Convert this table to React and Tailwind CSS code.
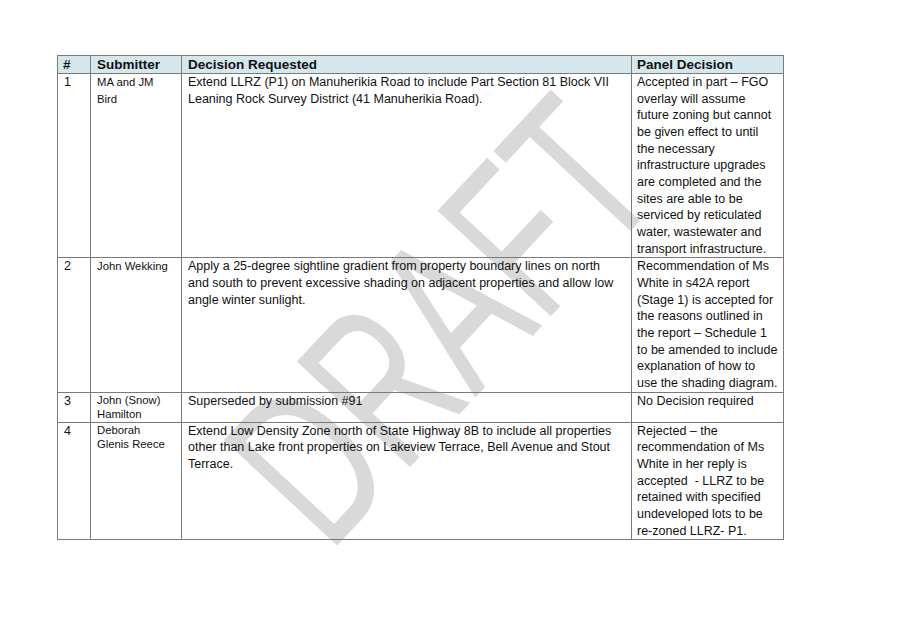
const rows = [
  {
    num: "1",
    submitter: ["MA and JM", "Bird"],
    subLeading: "leading-[16.67px]",
    request: [
      "Extend LLRZ (P1) on Manuherikia Road to include Part Section 81 Block VII",
      "Leaning Rock Survey District (41 Manuherikia Road).",
    ],
    decision: [
      "Accepted in part – FGO",
      "overlay will assume",
      "future zoning but cannot",
      "be given effect to until",
      "the necessary",
      "infrastructure upgrades",
      "are completed and the",
      "sites are able to be",
      "serviced by reticulated",
      "water, wastewater and",
      "transport infrastructure.",
    ],
    height: "h-[183px]",
  },
  {
    num: "2",
    submitter: ["John Wekking"],
    subLeading: "leading-[16.67px]",
    request: [
      "Apply a 25-degree sightline gradient from property boundary lines on north",
      "and south to prevent excessive shading on adjacent properties and allow low",
      "angle winter sunlight.",
    ],
    decision: [
      "Recommendation of Ms",
      "White in s42A report",
      "(Stage 1) is accepted for",
      "the reasons outlined in",
      "the report – Schedule 1",
      "to be amended to include",
      "explanation of how to",
      "use the shading diagram.",
    ],
    height: "h-[134px]",
  },
  {
    num: "3",
    submitter: ["John (Snow)", "Hamilton"],
    subLeading: "leading-[14px]",
    request: ["Superseded by submission #91"],
    decision: ["No Decision required"],
    height: "h-[30px]",
  },
  {
    num: "4",
    submitter: ["Deborah", "Glenis Reece"],
    subLeading: "leading-[14px]",
    request: [
      "Extend Low Density Zone north of State Highway 8B to include all properties",
      "other than Lake front properties on Lakeview Terrace, Bell Avenue and Stout",
      "Terrace.",
    ],
    decision: [
      "Rejected – the",
      "recommendation of Ms",
      "White in her reply is",
      "accepted  - LLRZ to be",
      "retained with specified",
      "undeveloped lots to be",
      "re-zoned LLRZ- P1.",
    ],
    height: "h-[117px]",
  },
];

const Lines = ({ lines }) =>
  lines.map((l, i) => (
    <span key={i} className="block whitespace-pre">
      {l}
    </span>
  ));

export default function App() {
  return (
    <div className="relative w-[907px] h-[626px] bg-white overflow-hidden font-['Liberation_Sans',Arial,sans-serif] text-[#111]">
      {/* watermark */}
      <svg
        className="absolute inset-0 pointer-events-none"
        width="907"
        height="626"
      >
        <text
          x="0"
          y="0"
          textAnchor="middle"
          dominantBaseline="central"
          transform="translate(440 320) rotate(-47) scale(0.66 1)"
          fontFamily="Liberation Sans, Arial, sans-serif"
          fontSize="225"
          fill="#d9d9d9"
        >
          DRAFT
        </text>
      </svg>

      <div className="relative pt-[55px] pl-[57px]">
        <table className="table-fixed border-collapse w-[726px]">
          <colgroup>
            <col className="w-[33px]" />
            <col className="w-[91px]" />
            <col className="w-[450px]" />
            <col className="w-[152px]" />
          </colgroup>
          <thead>
            <tr className="h-[18px] bg-[#d3e7ec] text-[13.5px] font-bold leading-[17px]">
              <th className="border border-[#7a7a7a] text-left align-top pl-[5px] py-0">#</th>
              <th className="border border-[#7a7a7a] text-left align-top pl-[6px] py-0">Submitter</th>
              <th className="border border-[#7a7a7a] text-left align-top pl-[6px] py-0">Decision Requested</th>
              <th className="border border-[#7a7a7a] text-left align-top pl-[5px] py-0">Panel Decision</th>
            </tr>
          </thead>
          <tbody>
            {rows.map((r) => (
              <tr key={r.num} className={r.height}>
                <td className="border border-[#7a7a7a] align-top pl-[6px] pt-0 text-[12.5px] leading-[16.67px]">
                  {r.num}
                </td>
                <td className={`border border-[#7a7a7a] align-top pl-[6px] pt-0 text-[11.3px] ${r.subLeading}`}>
                  <Lines lines={r.submitter} />
                </td>
                <td className="border border-[#7a7a7a] align-top pl-[6px] pt-0 text-[12.5px] leading-[16.67px]">
                  <Lines lines={r.request} />
                </td>
                <td className="border border-[#7a7a7a] align-top pl-[5px] pt-0 text-[12.5px] leading-[16.67px]">
                  <Lines lines={r.decision} />
                </td>
              </tr>
            ))}
          </tbody>
        </table>
      </div>
    </div>
  );
}
